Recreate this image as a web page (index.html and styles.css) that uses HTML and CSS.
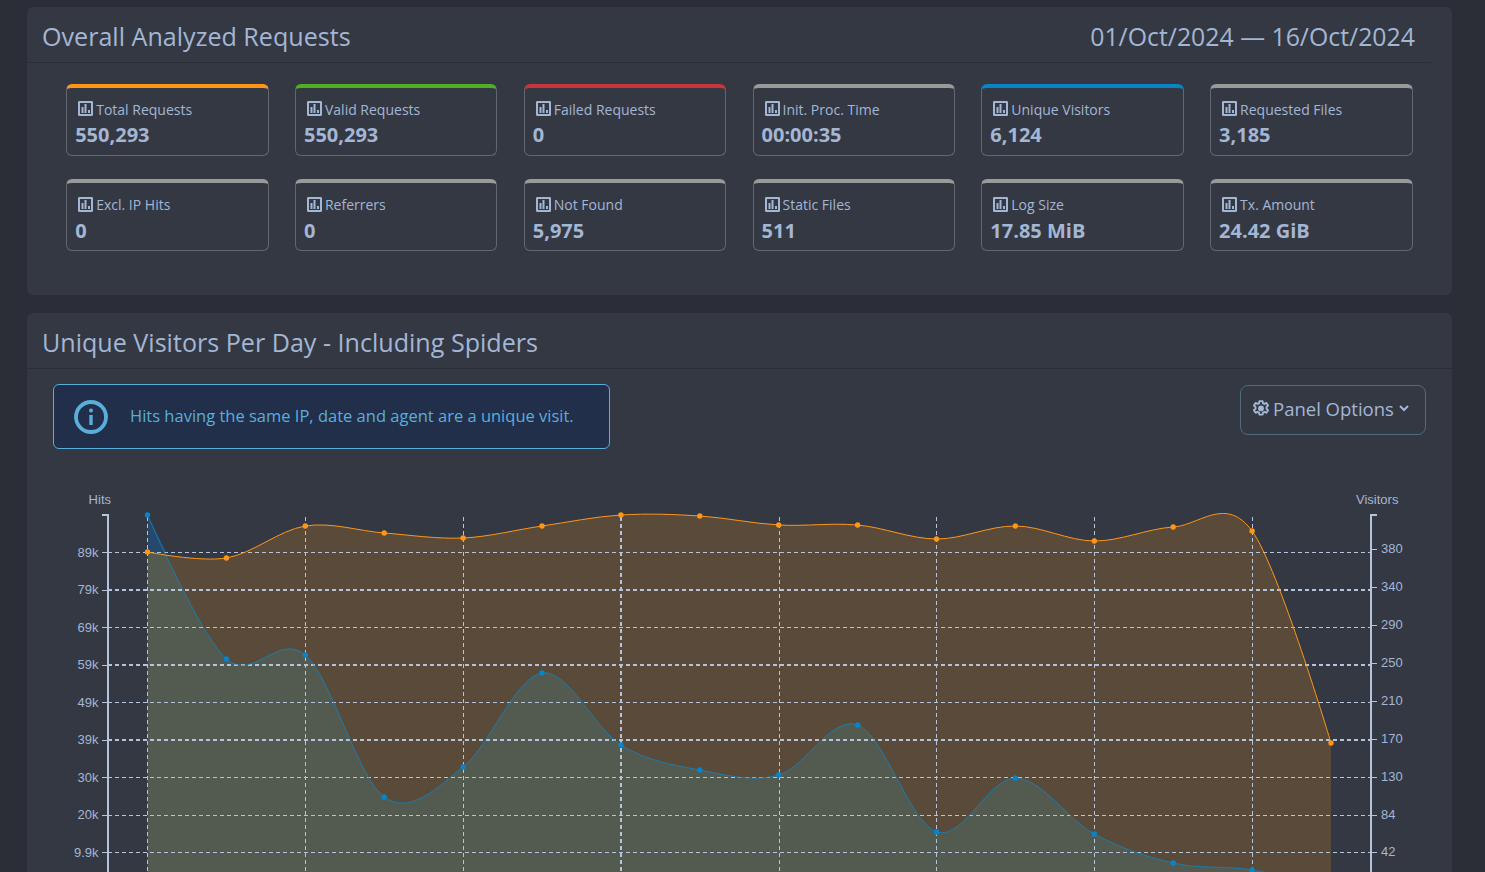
FILE: index.html
```html
<!DOCTYPE html>
<html lang="en">
<head>
<meta charset="utf-8">
<title>Server Statistics</title>
<link rel="stylesheet" href="styles.css">
</head>
<body>
<svg class="defs" width="0" height="0" aria-hidden="true">
  <symbol id="ic-bars" viewBox="0 0 15 15">
    <path fill-rule="evenodd" d="M1.2 0h12.6A1.2 1.2 0 0 1 15 1.2v12.6a1.2 1.2 0 0 1-1.2 1.2H1.2A1.2 1.2 0 0 1 0 13.800V1.200A1.200 1.200 0 0 1 1.200 0zM2 2v11h11V2z"/>
    <rect x="3.500" y="6" width="2" height="6"/>
    <rect x="6.500" y="3" width="2" height="9"/>
    <rect x="10" y="9" width="2" height="3"/>
  </symbol>
</svg>
<main class="page">
  <section class="panel">
    <header class="panel-head head-short">
      <h2>Overall Analyzed Requests</h2>
      <span class="dates">01/Oct/2024 — 16/Oct/2024</span>
    </header>
    <div class="stats">
      <div class="card top-orange"><div class="card-label"><svg class="ic"><use href="#ic-bars"/></svg>Total Requests</div><div class="card-value">550,293</div></div>
      <div class="card top-green"><div class="card-label"><svg class="ic"><use href="#ic-bars"/></svg>Valid Requests</div><div class="card-value">550,293</div></div>
      <div class="card top-red"><div class="card-label"><svg class="ic"><use href="#ic-bars"/></svg>Failed Requests</div><div class="card-value">0</div></div>
      <div class="card"><div class="card-label"><svg class="ic"><use href="#ic-bars"/></svg>Init. Proc. Time</div><div class="card-value">00:00:35</div></div>
      <div class="card top-blue"><div class="card-label"><svg class="ic"><use href="#ic-bars"/></svg>Unique Visitors</div><div class="card-value">6,124</div></div>
      <div class="card"><div class="card-label"><svg class="ic"><use href="#ic-bars"/></svg>Requested Files</div><div class="card-value">3,185</div></div>
      <div class="card"><div class="card-label"><svg class="ic"><use href="#ic-bars"/></svg>Excl. IP Hits</div><div class="card-value">0</div></div>
      <div class="card"><div class="card-label"><svg class="ic"><use href="#ic-bars"/></svg>Referrers</div><div class="card-value">0</div></div>
      <div class="card"><div class="card-label"><svg class="ic"><use href="#ic-bars"/></svg>Not Found</div><div class="card-value">5,975</div></div>
      <div class="card"><div class="card-label"><svg class="ic"><use href="#ic-bars"/></svg>Static Files</div><div class="card-value">511</div></div>
      <div class="card"><div class="card-label"><svg class="ic"><use href="#ic-bars"/></svg>Log Size</div><div class="card-value">17.85 MiB</div></div>
      <div class="card"><div class="card-label"><svg class="ic"><use href="#ic-bars"/></svg>Tx. Amount</div><div class="card-value">24.42 GiB</div></div>
    </div>
  </section>

  <section class="panel">
    <header class="panel-head">
      <h2>Unique Visitors Per Day - Including Spiders</h2>
    </header>
    <div class="tools">
      <div class="alert">
        <svg class="alert-ic" viewBox="0 0 36 36"><circle cx="18" cy="18" r="15" fill="none" stroke="currentColor" stroke-width="3.800"/><rect x="16.300" y="16" width="3.400" height="10" fill="currentColor"/><circle cx="18" cy="11.500" r="2" fill="currentColor"/></svg>
        <span>Hits having the same IP, date and agent are a unique visit.</span>
      </div>
      <div class="options">
        <svg class="gear" viewBox="0 0 16 16"><path fill="none" stroke="currentColor" stroke-width="1.700" stroke-linejoin="round" d="M6.600 1h2.800l.4 1.900 1.300.6 1.700-.9 1.500 2.300-1.400 1.300v1.600l1.400 1.300-1.500 2.300-1.700-.9-1.300.7-.4 1.800H6.600l-.4-1.800-1.300-.7-1.700.9-1.500-2.300 1.400-1.300V6.200L1.700 4.900l1.500-2.300 1.700.9 1.300-.6z"/><circle cx="8" cy="7.500" r="2.600" fill="currentColor"/></svg>
        <span>Panel Options</span>
        <svg class="chev" viewBox="0 0 10 7"><path fill="none" stroke="currentColor" stroke-width="2" d="M1 1l4 4 4-4"/></svg>
      </div>
    </div>
    <svg class="chart" viewBox="27 470 1425 440" width="1425" height="440">
      <path class="area-blue" d="M147.500 515C147.500 515 200.100 635.670 226.400 659C252.700 682.330 279 632 305.300 655C331.600 678 357.900 778.330 384.200 797C410.500 815.670 436.800 787.670 463.100 767C489.400 746.330 515.700 676.670 542 673C568.300 669.330 594.600 728.830 620.900 745C647.200 761.170 673.500 765 699.800 770C726.100 775 752.400 782.500 778.700 775C805 767.500 831.300 715.500 857.600 725C883.900 734.500 910.200 823.170 936.500 832C962.800 840.830 989.100 777.670 1015.400 778C1041.700 778.330 1068 819.830 1094.300 834C1120.600 848.170 1146.900 857 1173.200 863C1199.500 869 1225.800 865.830 1252.100 870C1278.400 874.170 1331 888 1331 888V910H147.500Z"/>
      <path class="area-blue-top" d="M147.500 515L167 553L147.500 552Z"/>
      <path class="area-orange" d="M147.500 552C147.500 552 200.100 562.330 226.400 558C252.700 553.670 279 530.170 305.300 526C331.600 521.830 357.900 531 384.200 533C410.500 535 436.800 539.170 463.100 538C489.400 536.830 515.700 529.830 542 526C568.300 522.170 594.600 516.670 620.900 515C647.200 513.330 673.500 514.330 699.800 516C726.100 517.670 752.400 523.500 778.700 525C805 526.500 831.300 522.670 857.600 525C883.900 527.330 910.200 538.830 936.500 539C962.800 539.170 989.100 525.670 1015.400 526C1041.700 526.170 1068 540.830 1094.300 541C1120.600 541.170 1146.900 528.670 1173.200 527C1199.500 525.330 1225.800 495 1252.100 531C1278.400 567 1331 743 1331 743V910H147.500Z"/>
      <g class="grid">
        <path d="M108 552.500H1371M108 627.500H1371M108 702.500H1371M108 777.500H1371M108 815.500H1371M108 852.500H1371"/>
        <path class="thick" d="M108 590H1371M108 665H1371M108 740H1371"/>
        <path d="M147.500 517V910M305.500 517V910M463.500 517V910M779.500 517V910M936.500 517V910M1094.500 517V910M1252.500 517V910"/>
        <path class="thick" d="M621 517V910"/>
      </g>
      <path class="line-blue" d="M147.500 515C147.500 515 200.100 635.670 226.400 659C252.700 682.330 279 632 305.300 655C331.600 678 357.900 778.330 384.200 797C410.500 815.670 436.800 787.670 463.100 767C489.400 746.330 515.700 676.670 542 673C568.300 669.330 594.600 728.830 620.900 745C647.200 761.170 673.500 765 699.800 770C726.100 775 752.400 782.500 778.700 775C805 767.500 831.300 715.500 857.600 725C883.900 734.500 910.200 823.170 936.500 832C962.800 840.830 989.100 777.670 1015.400 778C1041.700 778.330 1068 819.830 1094.300 834C1120.600 848.170 1146.900 857 1173.200 863C1199.500 869 1225.800 865.830 1252.100 870C1278.400 874.170 1331 888 1331 888"/>
      <path class="line-orange" d="M147.500 552C147.500 552 200.100 562.330 226.400 558C252.700 553.670 279 530.170 305.300 526C331.600 521.830 357.900 531 384.200 533C410.500 535 436.800 539.170 463.100 538C489.400 536.830 515.700 529.830 542 526C568.300 522.170 594.600 516.670 620.900 515C647.200 513.330 673.500 514.330 699.800 516C726.100 517.670 752.400 523.500 778.700 525C805 526.500 831.300 522.670 857.600 525C883.900 527.330 910.200 538.830 936.500 539C962.800 539.170 989.100 525.670 1015.400 526C1041.700 526.170 1068 540.830 1094.300 541C1120.600 541.170 1146.900 528.670 1173.200 527C1199.500 525.330 1225.800 495 1252.100 531C1278.400 567 1331 743 1331 743"/>
      <g class="dots-blue">
        <circle cx="147.500" cy="515" r="2.700"/><circle cx="226.400" cy="659" r="2.700"/><circle cx="305.300" cy="655" r="2.700"/><circle cx="384.200" cy="797" r="2.700"/><circle cx="463.100" cy="767" r="2.700"/><circle cx="542" cy="673" r="2.700"/><circle cx="620.900" cy="745" r="2.700"/><circle cx="699.800" cy="770" r="2.700"/><circle cx="778.700" cy="775" r="2.700"/><circle cx="857.600" cy="725" r="2.700"/><circle cx="936.500" cy="832" r="2.700"/><circle cx="1015.400" cy="778" r="2.700"/><circle cx="1094.300" cy="834" r="2.700"/><circle cx="1173.200" cy="863" r="2.700"/><circle cx="1252.100" cy="870" r="2.700"/><circle cx="1331" cy="888" r="2.700"/>
      </g>
      <g class="dots-orange">
        <circle cx="147.500" cy="552" r="2.700"/><circle cx="226.400" cy="558" r="2.700"/><circle cx="305.300" cy="526" r="2.700"/><circle cx="384.200" cy="533" r="2.700"/><circle cx="463.100" cy="538" r="2.700"/><circle cx="542" cy="526" r="2.700"/><circle cx="620.900" cy="515" r="2.700"/><circle cx="699.800" cy="516" r="2.700"/><circle cx="778.700" cy="525" r="2.700"/><circle cx="857.600" cy="525" r="2.700"/><circle cx="936.500" cy="539" r="2.700"/><circle cx="1015.400" cy="526" r="2.700"/><circle cx="1094.300" cy="541" r="2.700"/><circle cx="1173.200" cy="527" r="2.700"/><circle cx="1252.100" cy="531" r="2.700"/><circle cx="1331" cy="743" r="2.700"/>
      </g>
      <path class="axis" d="M102 515H108V910M1377 515H1371V910"/>
      <path class="tick" d="M102 552.500H108M102 590H108M102 627.500H108M102 665H108M102 702.500H108M102 740H108M102 777.500H108M102 815H108M102 852.500H108M1371 549H1377M1371 587H1377M1371 625H1377M1371 663H1377M1371 701H1377M1371 739H1377M1371 777H1377M1371 815H1377M1371 852H1377"/>
      <g class="labels end">
        <text x="111" y="503.500">Hits</text>
        <text x="98.500" y="556.500">89k</text><text x="98.500" y="594">79k</text><text x="98.500" y="631.500">69k</text><text x="98.500" y="669">59k</text><text x="98.500" y="706.500">49k</text><text x="98.500" y="744">39k</text><text x="98.500" y="781.500">30k</text><text x="98.500" y="819">20k</text><text x="98.500" y="856.500">9.9k</text>
      </g>
      <g class="labels">
        <text x="1356" y="503.500">Visitors</text>
        <text x="1381" y="553">380</text><text x="1381" y="591">340</text><text x="1381" y="629">290</text><text x="1381" y="667">250</text><text x="1381" y="705">210</text><text x="1381" y="743">170</text><text x="1381" y="781">130</text><text x="1381" y="819">84</text><text x="1381" y="856">42</text>
      </g>
    </svg>
  </section>
</main>
</body>
</html>
```
FILE: styles.css
```css
* { box-sizing: border-box; }
html, body { height: 100%; margin: 0; overflow: hidden; }
body {
  background: #2b2e37;
  color: #a3b6d4;
  font-family: "Open Sans", "Noto Sans", sans-serif;
}
.defs { position: absolute; }
.page {
  display: flex;
  flex-direction: column;
  gap: 18px;
  padding: 7px 33px 0 27px;
}
.panel {
  background: #343843;
  border-radius: 6px;
}
.panel-head {
  display: flex;
  justify-content: space-between;
  align-items: center;
  height: 56px;
  padding: 2px 15px 0;
  border-bottom: 1px solid #2b2e37;
}
.head-short { margin-right: 21px; }
.panel-head h2 {
  margin: 0;
  font-size: 25.1px;
  font-weight: 400;
  line-height: 32px;
}
.dates { font-size: 24.85px; line-height: 32px; margin-right: 1px; }
.stats {
  display: grid;
  grid-template-columns: repeat(6, 202.45px);
  column-gap: 26.35px;
  row-gap: 23.4px;
  padding: 21px 39px 43.7px 39.2px;
}
.card {
  height: 72px;
  border: 1px solid #62666f;
  border-top: 4px solid #9a9a9a;
  border-radius: 6px;
  padding: 12px 8px 0;
}
.top-orange { border-top-color: #ff9617; }
.top-green { border-top-color: #4fb024; }
.top-red { border-top-color: #c8363b; }
.top-blue { border-top-color: #0a84c6; }
.card-label {
  display: flex;
  align-items: center;
  gap: 3px;
  padding-left: 3px;
  font-size: 14px;
  line-height: 20.3px;
}
.ic { width: 15px; height: 15px; margin-top: -3px; fill: #a3b6d4; }
.card-value {
  font-size: 20px;
  font-weight: 700;
  line-height: 30px;
}
.tools {
  display: flex;
  justify-content: space-between;
  align-items: flex-start;
  padding: 15px 26px 0;
}
.alert {
  display: flex;
  align-items: center;
  gap: 21px;
  width: 557px;
  height: 65px;
  padding: 0 0 2px 19px;
  background: #212f4a;
  border: 1px solid #5aaedc;
  border-radius: 6px;
  color: #5aaedc;
  font-size: 16.5px;
}
.alert-ic { width: 36px; height: 36px; flex: none; margin-top: 2px; }
.options {
  display: flex;
  align-items: center;
  gap: 3px;
  width: 186px;
  height: 50px;
  margin-top: 1px;
  padding: 0 0 3px 11px;
  border: 1px solid #4e6c7d;
  border-radius: 8px;
  font-size: 18.5px;
}
.gear { width: 18px; height: 18px; flex: none; }
.chev { width: 10px; height: 7px; margin: -1px 0 0 2px; flex: none; }
.chart { display: block; margin-top: 21px; }
.area-blue { fill: #2c4c5d; }
.area-blue-top { fill: #26486b; }
.area-orange { fill: #ff9c14; fill-opacity: .19; }
.line-blue { fill: none; stroke: #0f86c4; stroke-width: 1; stroke-opacity: .8; }
.line-orange { fill: none; stroke: #ff9617; stroke-width: 1; }
.dots-blue { fill: #0585cc; }
.dots-orange { fill: #ff9617; }
.grid path {
  fill: none;
  stroke: #b4c4da;
  stroke-width: 1;
  stroke-dasharray: 4 3;
  shape-rendering: crispEdges;
}
.grid .thick { stroke-width: 2; }
.axis { fill: none; stroke: #b4c4da; stroke-width: 2; shape-rendering: crispEdges; }
.tick { fill: none; stroke: #b4c4da; stroke-width: 1; shape-rendering: crispEdges; }
.labels { font-family: "Liberation Sans", Arial, sans-serif; font-size: 13px; fill: #a3b6d4; }
.end { text-anchor: end; }
```
